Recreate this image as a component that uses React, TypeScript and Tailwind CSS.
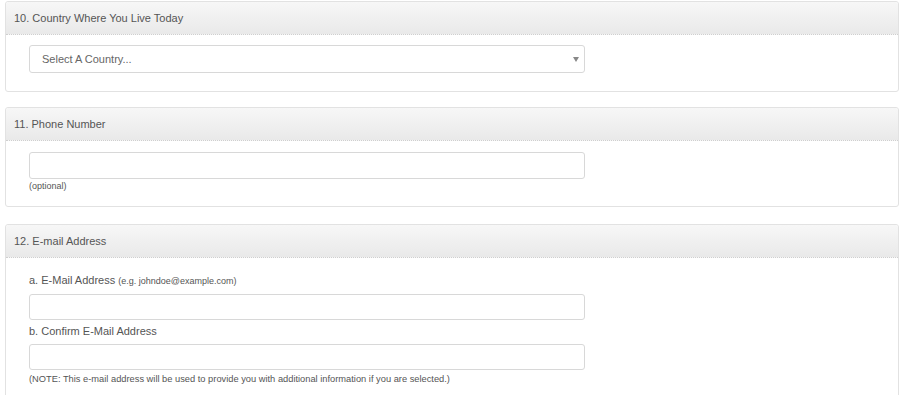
import React from 'react';

interface PanelProps {
  title: string;
  className?: string;
  bodyClassName?: string;
  children: React.ReactNode;
}

const Panel: React.FC<PanelProps> = ({ title, className = '', bodyClassName = '', children }) => (
  <div className={`w-[894px] rounded-[3px] border border-[#e2e2e2] bg-white ${className}`}>
    <div className="flex h-[33px] items-center rounded-t-[3px] border-b border-dotted border-[#cfcfcf] bg-gradient-to-b from-[#f7f7f7] to-[#e9e9e9] pl-[8px] text-[11px] text-[#555]">
      {title}
    </div>
    <div className={`pl-[23px] ${bodyClassName}`}>{children}</div>
  </div>
);

const TextBox: React.FC<{ className?: string }> = ({ className = '' }) => (
  <div className={`w-[556px] rounded-[3px] border border-[#d8d8d8] bg-white ${className}`} />
);

export default function App() {
  return (
    <div className="min-h-screen bg-white pl-[5px] pt-[1px] font-['Liberation_Sans',Arial,sans-serif]">
      <Panel title="10. Country Where You Live Today" bodyClassName="pt-[10px] pb-[18px]">
        <div className="flex h-[28px] w-[556px] items-center justify-between rounded-[3px] border border-[#d8d8d8] pl-[12px] pr-[5px] text-[11px] text-[#666]">
          <span>Select A Country...</span>
          <svg width="6" height="5" viewBox="0 0 6 5">
            <path d="M0 0 L6 0 L3 5 Z" fill="#888" />
          </svg>
        </div>
      </Panel>

      <Panel title="11. Phone Number" className="mt-[15px]" bodyClassName="pt-[11px] pb-[14px]">
        <TextBox className="h-[27px]" />
        <div className="mt-[2px] text-[9px] leading-[11px] text-[#555]">(optional)</div>
      </Panel>

      <Panel title="12. E-mail Address" className="mt-[17px]" bodyClassName="pt-[15px] pb-[14px]">
        <div className="text-[11px] leading-[14px] text-[#555]">
          a. E-Mail Address <span className="text-[9px]">(e.g. johndoe@example.com)</span>
        </div>
        <TextBox className="mt-[6px] h-[26px]" />
        <div className="mt-[4px] text-[11px] leading-[14px] text-[#555]">b. Confirm E-Mail Address</div>
        <TextBox className="mt-[6px] h-[26px]" />
        <div className="mt-[4px] text-[9.3px] leading-[11px] text-[#555]">
          (NOTE: This e-mail address will be used to provide you with additional information if you are selected.)
        </div>
      </Panel>
    </div>
  );
}
